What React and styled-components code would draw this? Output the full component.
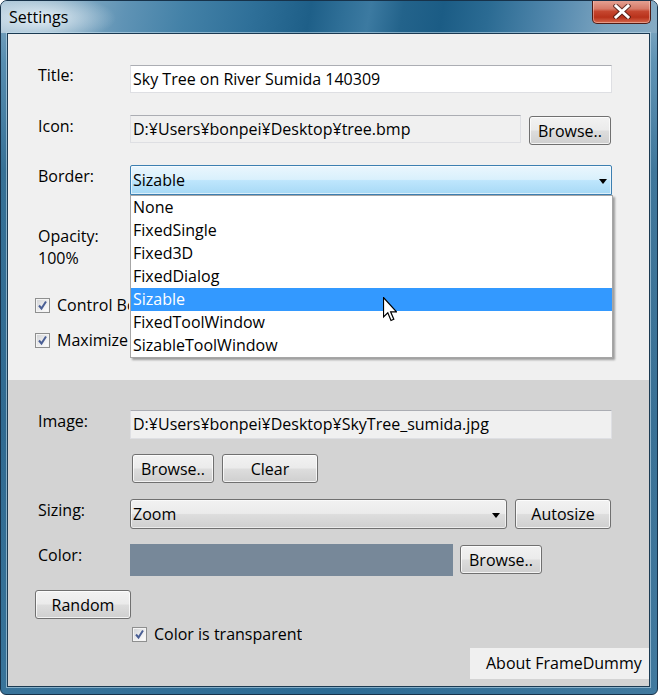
import React from 'react';
import styled, { createGlobalStyle } from 'styled-components';

const GlobalStyle = createGlobalStyle`
  html, body { margin: 0; padding: 0; background: #fff; }
  body {
    font-family: 'Open Sans', 'Noto Sans', 'Liberation Sans', sans-serif;
    font-size: 16px;
    color: #000;
  }
  *, *::before, *::after { box-sizing: border-box; }
`;

const Window = styled.div`
  width: 658px;
  height: 695px;
  display: flex;
  flex-direction: column;
  border: 1px solid #17324a;
  border-radius: 7px 7px 6px 6px;
  overflow: hidden;
  background:
    linear-gradient(90deg, rgba(255,255,255,0.06), rgba(0,0,0,0) 50%, rgba(255,255,255,0.1)),
    linear-gradient(180deg, #80a7c1 0px, #4d87ac 60px, #2a6890 170px, #23618a 420px, #2c6b94 100%);
`;

const TitleBar = styled.div`
  height: 32px;
  flex: none;
  display: flex;
  align-items: flex-start;
  padding-left: 8px;
  background:
    radial-gradient(ellipse 75px 24px at 40px 17px, rgba(236,244,250,0.9), rgba(236,244,250,0) 100%),
    linear-gradient(100deg,
      #a7c3d5 0%, #8cb0c7 9%, #5f93b5 19%, #4381a7 28%, #2f7099 38%,
      #1e5f88 47%, #2f6f97 52%, #3c7aa1 56%, #23638b 61%, #1b5c85 67%,
      #2b6b93 74%, #5489ae 84%, #7aa3bf 92%, #86abc4 100%);
`;

const TitleText = styled.span`
  font-size: 16px;
  line-height: 20px;
  margin-top: 6px;
  color: #000;
`;

const CloseButton = styled.div`
  margin-left: auto;
  margin-right: 6px;
  margin-top: -1px;
  width: 59px;
  height: 24px;
  display: flex;
  align-items: center;
  justify-content: center;
  border: 1px solid #4f1c16;
  border-top: none;
  border-radius: 0 0 5px 5px;
  background: linear-gradient(180deg, #e6a597 0%, #d67a68 38%, #c5462f 50%, #b8321b 75%, #d6694e 100%);
  box-shadow: inset 0 0 0 1px rgba(255, 220, 210, 0.45);
`;

const Frame = styled.div`
  flex: 1;
  display: flex;
  padding: 0 7px 7px 6px;
`;

const Client = styled.div`
  flex: 1;
  display: flex;
  flex-direction: column;
  border: 1px solid #1b3a52;
  box-shadow: 0 0 0 1px rgba(200, 225, 240, 0.55);
`;

const TopPanel = styled.div`
  height: 346px;
  flex: none;
  background: #f0f0f0;
  padding: 31px 0 0 30px;
  display: flex;
  flex-direction: column;
`;

const BottomPanel = styled.div`
  flex: 1;
  background: #d3d3d3;
  padding: 30px 0 0 30px;
  display: flex;
  flex-direction: column;
`;

const Row = styled.div`
  display: flex;
  align-items: flex-start;
  gap: ${p => p.$gap ?? 0}px;
  margin-top: ${p => p.$mt ?? 0}px;
  margin-left: ${p => p.$ml ?? 0}px;
  justify-content: ${p => (p.$end ? 'flex-end' : 'flex-start')};
`;

const Label = styled.div`
  width: 92px;
  flex: none;
  line-height: ${p => p.$lh ?? 20}px;
  padding-top: ${p => p.$pt ?? 1}px;
  white-space: nowrap;
`;

const Controls = styled.div`
  display: flex;
  align-items: flex-start;
  gap: ${p => p.$gap ?? 8}px;
`;

const TextBox = styled.div`
  width: ${p => p.$w}px;
  height: ${p => p.$h ?? 28}px;
  flex: none;
  background: ${p => (p.$ro ? '#f0f0f0' : '#ffffff')};
  border: 1px solid #dedfe3;
  border-top-color: #abadb3;
  padding-left: 2px;
  line-height: ${p => (p.$h ?? 28) - 2}px;
  white-space: nowrap;
  overflow: hidden;
`;

const Button = styled.div`
  width: ${p => p.$w}px;
  height: ${p => p.$h ?? 29}px;
  margin-top: ${p => p.$mt ?? 0}px;
  flex: none;
  display: flex;
  align-items: center;
  justify-content: center;
  border: 1px solid #707070;
  border-radius: 3px;
  background: linear-gradient(180deg, #f2f2f2 0%, #ebebeb 48%, #dddddd 52%, #cfcfcf 100%);
  box-shadow: inset 0 0 0 1px rgba(255, 255, 255, 0.75);
  white-space: nowrap;
`;

const ComboWrap = styled.div`
  position: relative;
  width: ${p => p.$w}px;
  flex: none;
`;

const Combo = styled.div`
  width: 100%;
  height: 30px;
  display: flex;
  align-items: center;
  justify-content: space-between;
  padding: 0 ${p => p.$arrowGap}px 0 2px;
  border: 1px solid ${p => (p.$hot ? '#3c7fb1' : '#707070')};
  border-radius: ${p => (p.$hot ? '2px 2px 0 0' : '3px')};
  background: ${p =>
    p.$hot
      ? 'linear-gradient(180deg, #eaf6fd 0%, #d9f0fc 48%, #bee6fd 52%, #a7d9f5 100%)'
      : 'linear-gradient(180deg, #f2f2f2 0%, #ebebeb 48%, #dddddd 52%, #cfcfcf 100%)'};
  box-shadow: inset 0 0 0 1px rgba(255, 255, 255, 0.6);
`;

const Arrow = styled.span`
  width: 0;
  height: 0;
  border-left: 4px solid transparent;
  border-right: 4px solid transparent;
  border-top: 5px solid #000;
  margin-top: 2px;
`;

const DropList = styled.div`
  position: absolute;
  top: 30px;
  left: 0;
  width: 483px;
  z-index: 5;
  background: #fff;
  border: 1px solid #a6a6a6;
  box-shadow: 2px 2px 2px rgba(0, 0, 0, 0.35);
  display: flex;
  flex-direction: column;
`;

const DropItem = styled.div`
  height: 23px;
  line-height: 23px;
  padding-left: 2px;
  background: ${p => (p.$sel ? '#3399ff' : 'transparent')};
  color: ${p => (p.$sel ? '#fff' : '#000')};
  white-space: nowrap;
`;

const Cursor = styled.svg`
  position: absolute;
  left: 253px;
  top: 132px;
  z-index: 6;
`;

const CheckRow = styled.label`
  display: flex;
  align-items: center;
  height: 20px;
  gap: 7px;
  margin-top: ${p => p.$mt ?? 0}px;
  margin-left: ${p => p.$ml ?? 0}px;
  white-space: nowrap;
`;

const CheckText = styled.span`
  max-width: ${p => (p.$clip ? `${p.$clip}px` : 'none')};
  overflow: hidden;
  white-space: nowrap;
`;

const CheckBox = styled.span`
  width: 15px;
  height: 15px;
  flex: none;
  border: 1px solid #8e8f8f;
  background: linear-gradient(135deg, #cfd1d4 0%, #eeeeef 55%, #ffffff 100%);
  box-shadow: inset 0 0 0 1px #f4f4f4;
  display: flex;
  align-items: center;
  justify-content: center;
`;

const Swatch = styled.div`
  width: 323px;
  height: 32px;
  flex: none;
  background: #778899;
`;

const AboutBox = styled.div`
  width: 179px;
  height: 31px;
  line-height: 31px;
  padding-left: 16px;
  background: #f0f0f0;
  white-space: nowrap;
`;

const Opacity = styled.div`
  margin-top: 30px;
  line-height: 22px;
`;

const borderStyles = ['None', 'FixedSingle', 'Fixed3D', 'FixedDialog', 'Sizable', 'FixedToolWindow', 'SizableToolWindow'];

const Check = () => (
  <CheckBox>
    <svg width="11" height="11" viewBox="0 0 11 11">
      <path d="M2 5.5 L4.5 8.5 L9 1.5" fill="none" stroke="#4a5f95" strokeWidth="2" />
    </svg>
  </CheckBox>
);

export default function App() {
  return (
    <>
      <GlobalStyle />
      <Window>
        <TitleBar>
          <TitleText>Settings</TitleText>
          <CloseButton>
            <svg width="18" height="15" viewBox="0 0 18 15">
              <path d="M3 2 L15 13 M15 2 L3 13" stroke="#3a1512" strokeWidth="5" strokeLinecap="square" opacity="0.7" />
              <path d="M3 2 L15 13 M15 2 L3 13" stroke="#ffffff" strokeWidth="3" strokeLinecap="square" />
            </svg>
          </CloseButton>
        </TitleBar>
        <Frame>
          <Client>
            <TopPanel>
              <Row>
                <Label $pt={0}>Title:</Label>
                <TextBox $w={482}>Sky Tree on River Sumida 140309</TextBox>
              </Row>
              <Row $mt={22}>
                <Label>Icon:</Label>
                <Controls>
                  <TextBox $w={391} $ro>D:¥Users¥bonpei¥Desktop¥tree.bmp</TextBox>
                  <Button $w={82} $mt={1}>Browse..</Button>
                </Controls>
              </Row>
              <Row $mt={20}>
                <Label>Border:</Label>
                <ComboWrap $w={482}>
                  <Combo $hot $arrowGap={4}>
                    <span>Sizable</span>
                    <Arrow />
                  </Combo>
                  <DropList>
                    {borderStyles.map(s => (
                      <DropItem key={s} $sel={s === 'Sizable'}>{s}</DropItem>
                    ))}
                  </DropList>
                  <Cursor width="14" height="26" viewBox="0 0 14 26">
                    <path d="M0.5 0.5 L0.5 20 L4.8 15.8 L8 23.5 L10.8 22.3 L7.6 14.8 L13.5 14.8 Z" fill="#fff" stroke="#000" strokeWidth="1.2" />
                  </Cursor>
                </ComboWrap>
              </Row>
              <Opacity>
                <div>Opacity:</div>
                <div>100%</div>
              </Opacity>
              <CheckRow $mt={26} $ml={-3}>
                <Check />
                <CheckText $clip={72}>Control Box</CheckText>
              </CheckRow>
              <CheckRow $mt={15} $ml={-3}>
                <Check />
                <CheckText $clip={72}>Maximize Box</CheckText>
              </CheckRow>
            </TopPanel>
            <BottomPanel>
              <Row>
                <Label>Image:</Label>
                <TextBox $w={482} $h={29} $ro>D:¥Users¥bonpei¥Desktop¥SkyTree_sumida.jpg</TextBox>
              </Row>
              <Row $mt={15} $ml={94} $gap={8}>
                <Button $w={82}>Browse..</Button>
                <Button $w={96}>Clear</Button>
              </Row>
              <Row $mt={16}>
                <Label>Sizing:</Label>
                <Controls>
                  <ComboWrap $w={377}>
                    <Combo $arrowGap={6}>
                      <span>Zoom</span>
                      <Arrow />
                    </Combo>
                  </ComboWrap>
                  <Button $w={96} $h={30}>Autosize</Button>
                </Controls>
              </Row>
              <Row $mt={15}>
                <Label>Color:</Label>
                <Controls $gap={7}>
                  <Swatch />
                  <Button $w={82} $mt={1}>Browse..</Button>
                </Controls>
              </Row>
              <Row $mt={14} $ml={-3}>
                <Button $w={96}>Random</Button>
              </Row>
              <CheckRow $mt={5} $ml={94}>
                <Check />
                <CheckText>Color is transparent</CheckText>
              </CheckRow>
              <Row $mt={4} $end>
                <AboutBox>About FrameDummy</AboutBox>
              </Row>
            </BottomPanel>
          </Client>
        </Frame>
      </Window>
    </>
  );
}
